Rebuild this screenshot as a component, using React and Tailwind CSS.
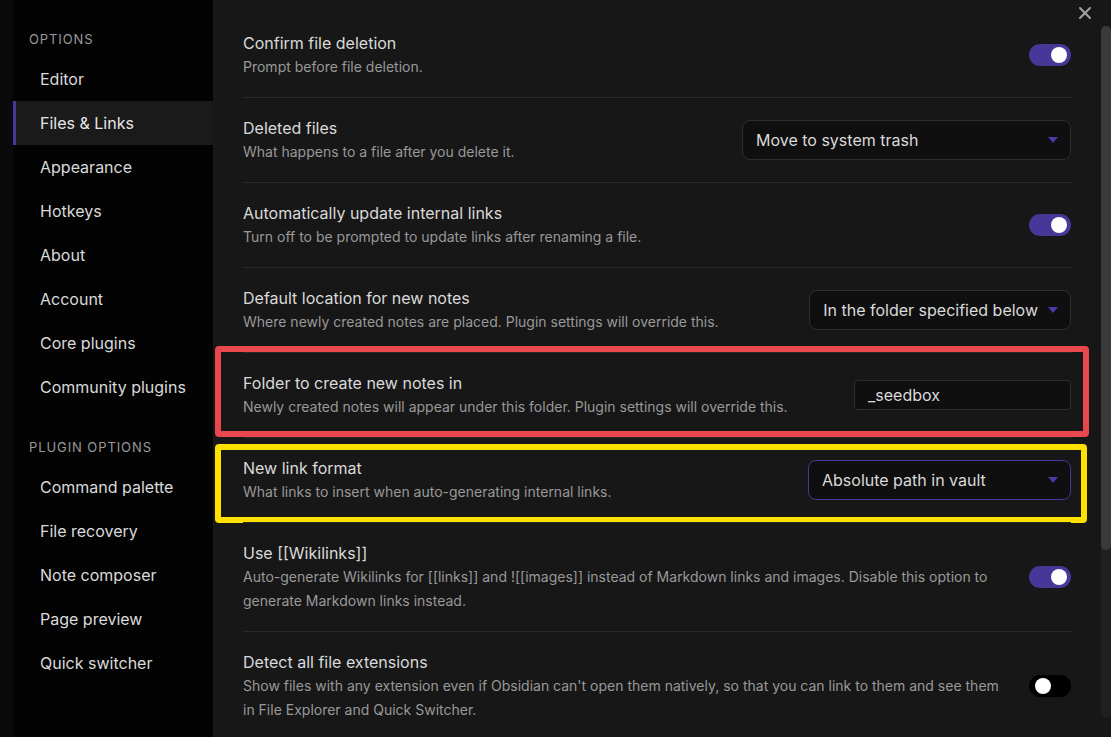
import { X } from 'lucide-react';

const OPTION_TABS = [
  'Editor',
  'Files & Links',
  'Appearance',
  'Hotkeys',
  'About',
  'Account',
  'Core plugins',
  'Community plugins',
];

const PLUGIN_TABS = ['Command palette', 'File recovery', 'Note composer', 'Page preview', 'Quick switcher'];

function TabGroup({ title, tabs, active }) {
  return (
    <div>
      <div className="h-4 pl-[16px] text-[13px] leading-4 tracking-[0.07em] text-[#999]">{title}</div>
      <div className="mt-[10px]">
        {tabs.map((tab) => (
          <div
            key={tab}
            className={`flex h-[44px] items-center border-l-[3px] pl-[24px] text-[16px] ${
              tab === active ? 'border-[#483699] bg-[#1a1a1a] text-[#e6e6e6]' : 'border-transparent text-[#dadada]'
            }`}
          >
            {tab}
          </div>
        ))}
      </div>
    </div>
  );
}

function Toggle({ on }) {
  return (
    <div
      className={`flex h-[22px] w-[42px] items-center rounded-full px-[4px] ${
        on ? 'justify-end bg-[#483699]' : 'justify-start bg-black pl-[6px]'
      }`}
    >
      <span className="h-4 w-4 rounded-full bg-white" />
    </div>
  );
}

function Dropdown({ value, focused }) {
  return (
    <div
      className={`flex h-[40px] items-center justify-between gap-[10px] whitespace-nowrap rounded-lg border bg-[#0f0f0f] pl-[13px] pr-[12px] text-[16px] text-[#dadada] ${
        focused ? 'border-[#483699]' : 'border-[#2e2e2e]'
      }`}
    >
      <span>{value}</span>
      <svg width="10" height="6" viewBox="0 0 10 6" className="shrink-0" aria-hidden="true">
        <path d="M0 0h10L5 6z" fill="#4b3aa8" />
      </svg>
    </div>
  );
}

function SettingRow({ title, desc, first, children, highlight }) {
  return (
    <div className={`relative flex items-center gap-6 py-[18px] ${first ? '' : 'border-t border-[#2a2a2a]'}`}>
      <div className="min-w-0 flex-1">
        <div className="text-[16px] leading-6 text-[#dadada]">{title}</div>
        <div className="text-[14px] leading-6 text-[#999]">{desc}</div>
      </div>
      <div className="shrink-0">{children}</div>
      {highlight === 'red' && (
        <div className="pointer-events-none absolute -left-[28px] -right-[18px] -top-[7px] bottom-0 rounded-[4px] border-[6px] border-[#e8484d]" />
      )}
      {highlight === 'yellow' && (
        <div className="pointer-events-none absolute -left-[28px] -right-[16px] top-[6px] -bottom-[1px] rounded-[4px] border-[6px] border-[#ffe100]" />
      )}
    </div>
  );
}

export default function App() {
  return (
    <div className="flex h-[737px] w-[1111px] overflow-hidden bg-[#171717] font-['Inter',sans-serif]">
      <div className="w-[13px] shrink-0 bg-[#0a0a0a]" />
      <nav className="w-[200px] shrink-0 bg-[#030303] pt-[31px]">
        <TabGroup title="OPTIONS" tabs={OPTION_TABS} active="Files & Links" />
        <div className="mt-[30px]">
          <TabGroup title="PLUGIN OPTIONS" tabs={PLUGIN_TABS} />
        </div>
      </nav>

      <main className="relative flex-1">
        <button className="absolute right-[16px] top-[3px] text-[#a0a0a0]" aria-label="Close">
          <X size={20} strokeWidth={2.5} />
        </button>
        <div className="absolute right-0 top-[26px] h-[692px] w-[10px] rounded-[5px] bg-[#1f1f1f]">
          <div className="h-[524px] w-full rounded-[5px] bg-[#3a3a3a]" />
        </div>

        <div className="pl-[30px] pr-[40px] pt-[13px]">
          <SettingRow first title="Confirm file deletion" desc="Prompt before file deletion.">
            <Toggle on />
          </SettingRow>
          <SettingRow title="Deleted files" desc="What happens to a file after you delete it.">
            <div className="w-[329px]">
              <Dropdown value="Move to system trash" />
            </div>
          </SettingRow>
          <SettingRow
            title="Automatically update internal links"
            desc="Turn off to be prompted to update links after renaming a file."
          >
            <Toggle on />
          </SettingRow>
          <SettingRow
            title="Default location for new notes"
            desc="Where newly created notes are placed. Plugin settings will override this."
          >
            <Dropdown value="In the folder specified below" />
          </SettingRow>
          <SettingRow
            highlight="red"
            title="Folder to create new notes in"
            desc="Newly created notes will appear under this folder. Plugin settings will override this."
          >
            <div className="flex h-[30px] w-[217px] items-center rounded-[4px] border border-[#2e2e2e] bg-[#0f0f0f] px-[13px] text-[16px] text-[#dadada]">
              _seedbox
            </div>
          </SettingRow>
          <SettingRow
            highlight="yellow"
            title="New link format"
            desc="What links to insert when auto-generating internal links."
          >
            <div className="w-[263px]">
              <Dropdown value="Absolute path in vault" focused />
            </div>
          </SettingRow>
          <SettingRow
            title="Use [[Wikilinks]]"
            desc="Auto-generate Wikilinks for [[links]] and ![[images]] instead of Markdown links and images. Disable this option to generate Markdown links instead."
          >
            <Toggle on />
          </SettingRow>
          <SettingRow
            title="Detect all file extensions"
            desc="Show files with any extension even if Obsidian can't open them natively, so that you can link to them and see them in File Explorer and Quick Switcher."
          >
            <Toggle />
          </SettingRow>
        </div>
      </main>
    </div>
  );
}
